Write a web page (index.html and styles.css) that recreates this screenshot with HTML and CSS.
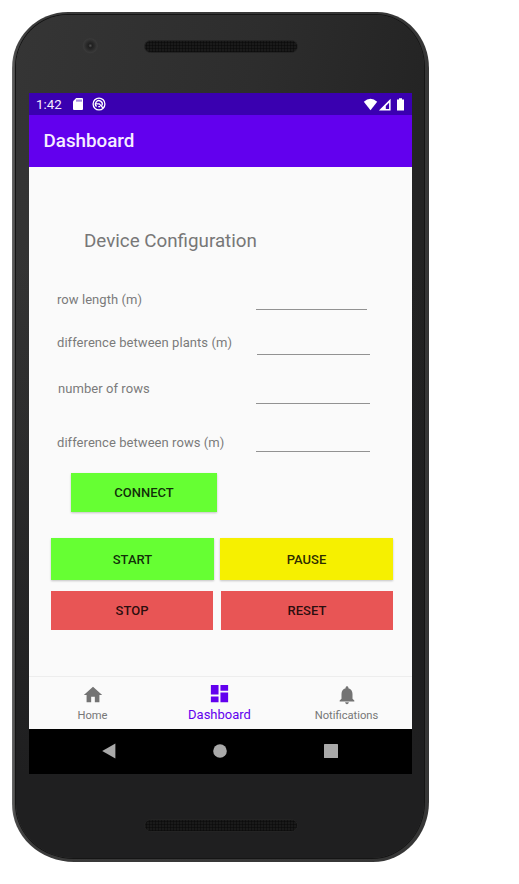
FILE: index.html
```html
<!DOCTYPE html>
<html lang="en">
<head>
<meta charset="utf-8">
<title>Dashboard</title>
<link rel="stylesheet" href="styles.css">
</head>
<body>
<div class="phone">
  <div class="face">
    <div class="bezel-top"><span class="camera"></span><span class="speaker"></span></div>
    <div class="screen">
      <div class="status">
        <span class="time">1:42</span>
        <svg class="sd" width="10" height="12" viewBox="0 0 10 12"><path fill="#fff" d="M3.2 0H9q1 0 1 1v10q0 1-1 1H1q-1 0-1-1V3.3z"/><path stroke="#3a00b0" stroke-width=".9" d="M4 1.5v2.2M6 1.5v2.2M8 1.5v2.2"/></svg>
        <svg class="debug" width="14" height="14" viewBox="0 0 14 14" fill="none" stroke="#fff"><circle cx="7" cy="7" r="5.9" stroke-width="1.3"/><path stroke-width="1.3" d="M4.6 9.6A3.4 3.4 0 1 1 10 8.4M4.3 6.8h3L11 11M6.3 9.7h1.8"/></svg>
        <span class="spacer"></span>
        <svg width="41" height="13" viewBox="0 0 41 13"><path fill="#fff" d="M.8 3.7Q7.5-2 14.2 3.7L7.5 12.2z"/><path fill="#fff" fill-rule="evenodd" d="M27.6 .8V12.5H15.9zM26.1 4.7L22.8 8v3H26.1z"/><path fill="#fff" d="M34 1.5h2V.3h3v1.2h2v11h-7z"/></svg>
      </div>
      <header class="appbar">Dashboard</header>
      <main class="content">
        <h1 class="title">Device Configuration</h1>
        <div class="row r1"><label class="label">row length (m)</label><span class="field"></span></div>
        <div class="row r2"><label class="label">difference between plants (m)</label><span class="field"></span></div>
        <div class="row r3"><label class="label">number of rows</label><span class="field"></span></div>
        <div class="row r4"><label class="label">difference between rows (m)</label><span class="field"></span></div>
        <button class="btn connect">CONNECT</button>
        <div class="pair first"><button class="btn start">START</button><button class="btn pause">PAUSE</button></div>
        <div class="pair second"><button class="btn stop">STOP</button><button class="btn reset">RESET</button></div>
      </main>
      <nav class="tabs">
        <div class="tab"><svg width="22" height="22" viewBox="0 0 24 24" fill="#737373"><path d="M10 20v-6h4v6h5v-8h3L12 3 2 12h3v8z"/></svg><span>Home</span></div>
        <div class="tab active"><svg width="23" height="23" viewBox="0 0 24 24" fill="#6200ee"><path d="M3 13h8V3H3v10zm0 8h8v-6H3v6zm10 0h8V11h-8v10zm0-18v6h8V3h-8z"/></svg><span>Dashboard</span></div>
        <div class="tab"><svg width="22" height="22" viewBox="0 0 24 24" fill="#737373"><path d="M12 22c1.1 0 2-.9 2-2h-4c0 1.1.9 2 2 2zm6-6v-5c0-3.07-1.64-5.64-4.5-6.32V4c0-.83-.67-1.5-1.5-1.5s-1.5.67-1.5 1.5v.68C7.63 5.36 6 7.92 6 11v5l-2 2v1h16v-1l-2-2z"/></svg><span>Notifications</span></div>
      </nav>
      <div class="sysnav">
        <svg width="14" height="16" viewBox="0 0 14 16"><path fill="#a9a9a9" d="M13.4.5v15L.2 8z"/></svg>
        <svg width="14" height="14" viewBox="0 0 14 14"><circle cx="7" cy="7" r="6.8" fill="#a9a9a9"/></svg>
        <svg width="14" height="14" viewBox="0 0 14 14"><rect width="14" height="14" rx=".5" fill="#a9a9a9"/></svg>
      </div>
    </div>
    <div class="bezel-bottom"><span class="speaker"></span></div>
  </div>
</div>
</body>
</html>
```

FILE: styles.css
```css
* { box-sizing: border-box; }
body { margin: 0; padding: 12px 0 0 12px; background: #fff; font-family: Roboto, sans-serif; height: 884px; overflow: hidden; }
.phone {
  width: 417px; height: 850px; padding: 3px 5px 4px 4px;
  border-radius: 56px 52px 56px 62px / 56px 56px 60px 58px;
  background: linear-gradient(90deg, #6a6a6a 0, #484848 3px, #3a3a3a 20px, #363636 100%);
}
.face {
  height: 843px; padding: 0 12px 0 13px;
  border-radius: 52px 48px 52px 58px / 52px 52px 56px 54px;
  background: linear-gradient(180deg, rgba(30,30,30,0) 30%, #1f1f20 90%), linear-gradient(100deg, #353535, #2d2d2d 45%, #1d1d1d);
  box-shadow: 0 0 0 1px #151515;
}
.bezel-top { display: flex; align-items: flex-start; height: 78px; }
.camera { width: 16px; height: 16px; margin: 23px 0 0 53px; border-radius: 50%; background: radial-gradient(circle at 52% 48%, #555 0, #202020 2px, #292929 4px, #343434 6px, #393939 7px, #333 8px); }
.speaker {
  width: 154px; height: 13px; border-radius: 7px; border: 1px solid #232323;
  background: radial-gradient(circle, #0c0c0c 0, #0c0c0c .8px, #1c1c1c 1.5px) 0 0 / 3px 3px;
}
.bezel-top .speaker { margin: 25px 0 0 46px; }
.bezel-bottom { display: flex; padding: 45px 0 0 115px; }
.screen { width: 383px; height: 681px; background: #fafafa; display: flex; flex-direction: column; }
.status { height: 22px; flex: none; background: #3a00b0; display: flex; align-items: center; padding: 0 8px 0 7px; color: #f4edff; font-size: 13.3px; }
.time { width: 37px; }
.debug { margin-left: 9px; }
.spacer { flex: 1; }
.appbar { height: 52px; flex: none; background: #6200ee; color: #f6eeff; font-size: 18.8px; font-weight: 500; line-height: 53px; padding-left: 14.5px; }
.content { height: 509px; padding-top: 62px; flex: none; }
.title { margin: 0 0 34px 55px; height: 24px; line-height: 25px; font-size: 18.8px; font-weight: 400; color: #777; white-space: nowrap; }
.row { display: grid; grid-template-columns: 199px 114px; align-items: end; margin-left: 28px; }
.r1 { height: 23px; }
.r2 { height: 45px; }
.r3 { height: 49px; }
.r4 { height: 48px; }
.label { color: #7b7b7b; font-size: 13px; letter-spacing: .06px; line-height: 16px; margin-bottom: 2px; white-space: nowrap; }
.r2 .label { margin-bottom: 4px; }
.r3 .label { margin-bottom: 7px; padding-left: 1px; }
.r4 .label { margin-bottom: 1px; }
.field { height: 20px; border-bottom: 1px solid #929292; }
.r1 .field { width: 111px; }
.r2 .field { margin-left: 1px; }
.btn { display: block; margin: 0; padding: 0; border: 0; color: rgba(0,0,0,.84); font: 500 13px Roboto, sans-serif; box-shadow: 0 1px 2px rgba(0,0,0,.22); }
.connect { width: 146px; height: 39px; margin: 21px 0 0 42px; background: #66ff33; }
.pair { display: flex; margin-left: 22px; }
.first { margin-top: 26px; gap: 6px; }
.second { margin-top: 11px; gap: 8px; }
.start { width: 163px; height: 42px; background: #66ff33; }
.pause { width: 173px; height: 42px; background: #f6f000; }
.stop, .reset { height: 39px; background: #e85555; box-shadow: none; }
.stop { width: 162px; }
.reset { width: 172px; }
.tabs { height: 53px; flex: none; display: grid; grid-template-columns: repeat(3, 1fr); border-top: 1px solid #ededed; padding-right: 2px; }
.tab { display: flex; flex-direction: column; align-items: center; color: #777; font-size: 11.2px; line-height: 14px; padding-top: 7px; }
.tab span { margin-top: 3px; }
.tab.active { color: #6200ee; font-size: 13px; padding-top: 5px; }
.sysnav { height: 45px; background: #000; display: flex; align-items: center; gap: 97px; padding: 0 0 1px 72.5px; }
```
